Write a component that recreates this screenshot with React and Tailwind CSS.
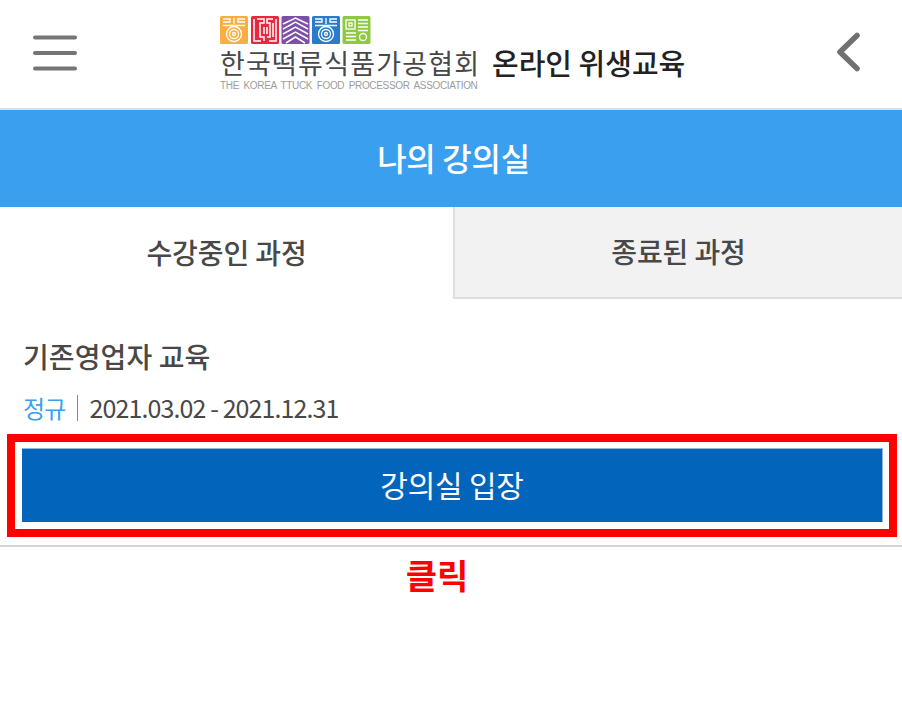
import React from 'react';

const font = { fontFamily: '"Noto Sans CJK KR", "Noto Sans", sans-serif' };

function Logo() {
    return (
        <svg width="152" height="29" viewBox="0 0 152 29" fill="none" className="block">
            {/* orange */}
            <rect x="0" y="0" width="28" height="28" rx="1.5" fill="#f9ae3f" />
            <g stroke="#fff" strokeWidth="1.3">
                <path d="M3 3h7v3h-7M25 3h-7v3h7M14 2v6M3 9.500h22" />
                <circle cx="14" cy="18" r="7.500" />
                <circle cx="14" cy="18" r="4.500" />
                <circle cx="14" cy="18" r="1.500" />
            </g>
            {/* red */}
            <rect x="31" y="0" width="28" height="28" rx="1.5" fill="#e8283f" />
            <g stroke="#fff" strokeWidth="1.5">
                <path d="M34 3v22h7M37 3h7v4h-4v14h4v4M56 3v22h-7M53 3h-6v4h3v14h-3M44 11v7M47 11v7M53 7v14" />
            </g>
            {/* purple */}
            <rect x="61.500" y="0" width="28" height="28" rx="1.5" fill="#7d4fa8" />
            <g stroke="#fff" strokeWidth="1.500">
                <path d="M63 8l12.500-6 12.500 6M63 13l12.500-7 12.500 7M63 18l12.500-7 12.500 7M63 23l12.500-7 12.500 7M66 27l9.500-6 9.500 6" />
            </g>
            {/* blue */}
            <rect x="92" y="0" width="28" height="28" rx="1.500" fill="#2a7bcb" />
            <g stroke="#fff" strokeWidth="1.300">
                <path d="M95 3h7v3h-7M117 3h-7v3h7M106 2v6M95 9.500h22" />
                <circle cx="106" cy="18" r="7.500" />
                <circle cx="106" cy="18" r="4.500" />
                <circle cx="106" cy="18" r="1.500" />
            </g>
            {/* green */}
            <rect x="122.500" y="0" width="28" height="28" rx="1.500" fill="#8fc942" />
            <g stroke="#fff" strokeWidth="1.300">
                <rect x="126" y="4" width="9" height="9" />
                <rect x="129" y="7" width="3" height="3" />
                <path d="M138 4h10M138 7.500h10M138 11h10M138 14.500h10M126 17h10M126 20.500h10M126 24h10" />
                <circle cx="143" cy="21" r="3.500" />
            </g>
        </svg>
    );
}

export default function App() {
    return (
        <div className="w-[902px] h-[726px] bg-white overflow-hidden" style={font}>
            {/* Header */}
            <header className="h-[110px] flex items-start border-b-2 border-[#dddddd]">
                <svg width="46" height="40" viewBox="0 0 46 40" className="ml-[32px] mt-[34px] shrink-0">
                    <path d="M3 3.500h40M3 19h40M3 34.500h40" stroke="#757575" strokeWidth="4" strokeLinecap="round" />
                </svg>
                <div className="ml-[142px] mt-[16px] w-[258px] shrink-0">
                    <Logo />
                    <div className="text-[27px] leading-[28px] mt-[4px] text-[#484848] tracking-[1.200px] whitespace-nowrap">한국떡류식품가공협회</div>
                    <div className="text-[10px] leading-[11px] mt-[3px] text-[#9c9c9c] tracking-[-0.330px] [word-spacing:2px] whitespace-nowrap" style={{ fontFamily: '"Liberation Sans", sans-serif' }}>THE KOREA TTUCK FOOD PROCESSOR ASSOCIATION</div>
                </div>
                <div className="ml-[14px] mt-[42px] text-[29px] leading-[40px] font-medium text-[#222222] whitespace-nowrap">온라인 위생교육</div>
                <svg width="28" height="42" viewBox="0 0 28 42" className="ml-auto mr-[39px] mt-[31px] shrink-0">
                    <path d="M22 4.500L5 21l17 16.500" fill="none" stroke="#707070" strokeWidth="5.500" strokeLinecap="round" strokeLinejoin="round" />
                </svg>
            </header>

            {/* Title bar */}
            <div className="h-[97px] bg-[#3a9fef] flex items-center justify-center text-white text-[32px] font-medium tracking-[-0.300px] pl-[5px] pb-[3px]">
                나의 강의실
            </div>

            {/* Tabs */}
            <div className="flex h-[92px]">
                <div className="w-[453px] flex items-center justify-center pb-[3px] text-[28px] font-medium text-[#484848] tracking-[-0.100px]">수강중인 과정</div>
                <div className="flex-1 flex items-center justify-center pb-[3px] bg-[#f2f2f2] border-l-2 border-b-2 border-[#dedede] text-[28px] font-medium text-[#484848] tracking-[-0.100px]">종료된 과정</div>
            </div>

            {/* Course */}
            <div className="pt-[37px] px-[23px]">
                <div className="text-[28px] leading-[40px] font-medium text-[#484848] tracking-[0.100px]">기존영업자 교육</div>
                <div className="mt-[14px] flex items-center h-[36px]">
                    <span className="text-[24px] text-[#3a9fef] tracking-[-0.800px]">정규</span>
                    <span className="w-[1px] h-[26px] bg-[#888888] ml-[11px] mr-[12px]"></span>
                    <span className="text-[25px] text-[#484848] tracking-[-0.900px]">2021.03.02 - 2021.12.31</span>
                </div>
            </div>

            {/* Enter button, red annotation frame */}
            <div className="mt-[8px] ml-[7px] w-[890px] h-[103px] border-[8px] border-[#ff0000] pl-[7px] pr-[6px] pt-[6px]">
                <div className="h-[74px] bg-[#0264ba] border-t border-r border-[#8fb9da] flex items-center justify-center pb-[3px] text-white text-[30px] tracking-[-0.200px]">
                    강의실 입장
                </div>
            </div>

            <div className="mt-[8px] h-[2px] bg-[#d4d4d4]"></div>

            <div className="mt-[3px] text-center text-[34px] leading-[50px] font-bold text-[#ff0000] -translate-x-[14px]">클릭</div>
        </div>
    );
}
